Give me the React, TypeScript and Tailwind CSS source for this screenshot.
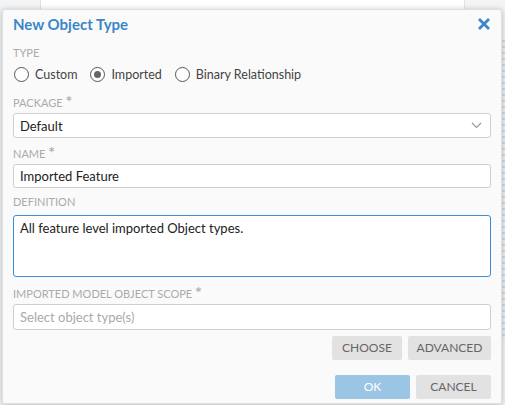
import { useState } from "react";

const labelCls = "h-[14px] text-[11px] leading-[14px] uppercase text-[#aaaaaa]";
const inputCls =
  "block w-full rounded-[3px] border border-[#cfcfcf] bg-white px-[6px] text-[13px] leading-[18px] text-[#222] outline-none";

function Radio({ label, checked, onClick }: { label: string; checked: boolean; onClick: () => void }) {
  return (
    <button type="button" onClick={onClick} className="flex items-center gap-[6px] text-[12.5px] leading-[17px] text-[#444]">
      <span className="w-[15px] h-[15px] rounded-full border border-[#555] bg-white flex items-center justify-center">
        {checked && <span className="w-[7px] h-[7px] rounded-full bg-[#666]" />}
      </span>
      {label}
    </button>
  );
}

function Star() {
  return <span className="text-[16px] leading-none font-bold text-[#b0b0b0]">*</span>;
}

export default function App() {
  const [type, setType] = useState("Imported");
  const [name, setName] = useState("Imported Feature");
  const [definition, setDefinition] = useState("All feature level imported Object types.");

  return (
    <div
      className="relative w-[505px] h-[405px] overflow-hidden bg-[#f2f4f6]"
      style={{ fontFamily: "Lato, 'Noto Sans', sans-serif" }}
    >
      {/* page behind the modal */}
      <div className="absolute left-[40px] top-0 w-[425px] h-[20px] bg-white border-x border-[#e2e2e2]" />
      <div className="absolute right-0 top-[40px] w-[4px] h-[300px] bg-[repeating-linear-gradient(#cfdbe6_0px,#cfdbe6_2px,#eef1f4_2px,#eef1f4_6px)]" />

      {/* modal */}
      <div className="absolute left-[2px] top-[9px] w-[500px] h-[395px] bg-[#fafafa] rounded-[3px] border border-[#e0e0e0] shadow-[0_1px_6px_rgba(0,0,0,0.25)] pl-[10px] pr-[10px]">
        <div className="flex items-center justify-between h-[28px]">
          <h1 className="text-[15px] leading-[20px] font-bold text-[#3a86c8]">New Object Type</h1>
          <button type="button" className="mr-[1px] text-[#3a86c8]">
            <svg width="12" height="12" viewBox="0 0 12 12">
              <path d="M2 2 L10 10 M10 2 L2 10" stroke="currentColor" strokeWidth="2.8" strokeLinecap="square" />
            </svg>
          </button>
        </div>

        <div className={`${labelCls} mt-[8px]`}>Type</div>
        <div className="flex items-center gap-[13px] mt-[6px] h-[17px] ml-[1px]">
          {["Custom", "Imported", "Binary Relationship"].map((t) => (
            <Radio key={t} label={t} checked={type === t} onClick={() => setType(t)} />
          ))}
        </div>

        <div className={`${labelCls} mt-[10px]`}>
          Package <Star />
        </div>
        <div className="relative mt-[6px]">
          <div className={`${inputCls} h-[25px] flex items-center`}>Default</div>
          <svg className="absolute right-[9px] top-[9px]" width="11" height="7" viewBox="0 0 11 7">
            <path d="M1 1 L5.5 5.5 L10 1" fill="none" stroke="#999" strokeWidth="1.2" />
          </svg>
        </div>

        <div className={`${labelCls} mt-[6px]`}>
          Name <Star />
        </div>
        <input className={`${inputCls} h-[24px] mt-[6px]`} value={name} onChange={(e) => setName(e.target.value)} />

        <div className={`${labelCls} mt-[7px]`}>Definition</div>
        <textarea
          className="block w-full h-[62px] mt-[6px] rounded-[3px] border border-[#3c8fd6] bg-white px-[6px] py-[3px] text-[13px] leading-[18px] text-[#222] outline-none resize-none"
          value={definition}
          onChange={(e) => setDefinition(e.target.value)}
        />

        <div className={`${labelCls} mt-[7px]`}>
          Imported Model Object Scope <Star />
        </div>
        <input
          className={`${inputCls} h-[26px] mt-[6px] placeholder:text-[#aaaaaa]`}
          placeholder="Select object type(s)"
        />

        <div className="flex justify-end gap-[6px] mt-[6px]">
          <button type="button" className="w-[70px] h-[24px] rounded-[2px] bg-[#e2e2e2] text-[12px] text-[#666] uppercase">
            Choose
          </button>
          <button type="button" className="w-[83px] h-[24px] rounded-[2px] bg-[#e2e2e2] text-[12px] text-[#666] uppercase">
            Advanced
          </button>
        </div>

        <div className="flex justify-end gap-[6px] mt-[15px]">
          <button type="button" className="w-[75px] h-[24px] rounded-[2px] bg-[#9ac5e5] text-[12px] text-white uppercase">
            OK
          </button>
          <button type="button" className="w-[75px] h-[24px] rounded-[2px] bg-[#e2e2e2] text-[12px] text-[#666] uppercase">
            Cancel
          </button>
        </div>
      </div>
    </div>
  );
}
